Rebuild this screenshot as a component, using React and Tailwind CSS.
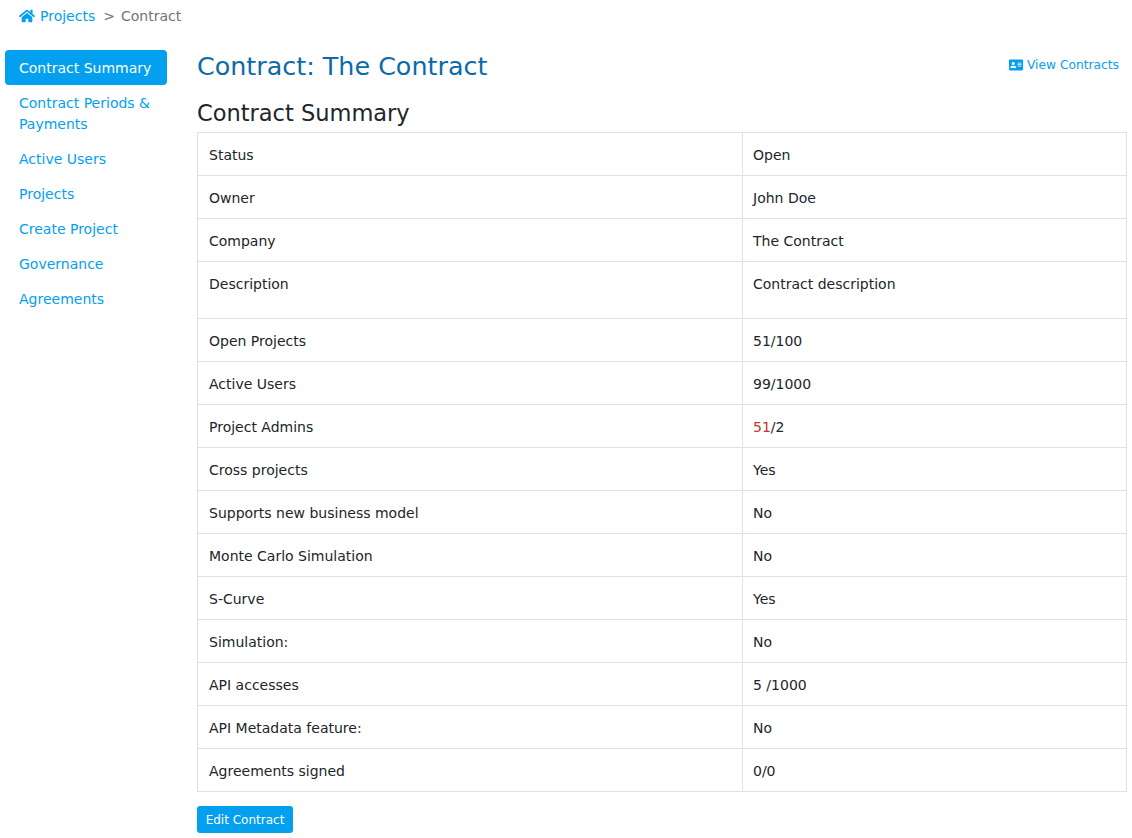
import { FaHome, FaAddressCard } from 'react-icons/fa';

const navItems = [
  'Contract Periods & Payments',
  'Active Users',
  'Projects',
  'Create Project',
  'Governance',
  'Agreements',
];

const rows = [
  ['Status', 'Open'],
  ['Owner', 'John Doe'],
  ['Company', 'The Contract'],
  ['Description', 'Contract description', 'h-[57px]'],
  ['Open Projects', '51/100'],
  ['Active Users', '99/1000'],
  ['Project Admins', <><span className="text-[#c0392b]">51</span>/2</>],
  ['Cross projects', 'Yes'],
  ['Supports new business model', 'No'],
  ['Monte Carlo Simulation', 'No'],
  ['S-Curve', 'Yes'],
  ['Simulation:', 'No'],
  ['API accesses', '5 /1000'],
  ['API Metadata feature:', 'No'],
  ['Agreements signed', '0/0'],
];

export default function App() {
  return (
    <div className="w-[1132px] h-[838px] overflow-hidden bg-white text-[14px] leading-[21px] text-[#212529] font-['DejaVu_Sans',sans-serif]">
      <div className="flex items-center h-[32px] pl-[19px] text-[#6c757d]">
        <a className="flex items-center gap-[5px] text-[#03a0f0]">
          <FaHome className="text-[16px]" />
          Projects
        </a>
        <span className="ml-[8px] mr-[6px]">&gt;</span>
        <span>Contract</span>
      </div>

      <div className="flex mt-[18px]">
        <nav className="w-[162px] ml-[5px] shrink-0 flex flex-col">
          <a className="rounded bg-[#03a0f0] text-white px-[14px] pt-[8px] pb-[6px]">Contract Summary</a>
          {navItems.map((item) => (
            <a key={item} className="px-[14px] pt-[8px] pb-[6px] text-[#03a0f0]">{item}</a>
          ))}
        </nav>

        <main className="ml-[30px] w-[930px]">
          <div className="flex items-center justify-between h-[32px]">
            <h1 className="text-[25.4px] font-normal text-[#0b6aa8]">Contract: The Contract</h1>
            <a className="flex items-center gap-[4px] text-[12.25px] leading-[18px] text-[#03a0f0] mr-[8px] -translate-y-px">
              <FaAddressCard className="text-[14px]" />
              View Contracts
            </a>
          </div>
          <h2 className="mt-[19px] text-[22.5px] leading-[25px] text-[#212529]">Contract Summary</h2>
          <table className="mt-[6px] w-full border-collapse border border-[#dee2e6]">
            <tbody>
              {rows.map(([label, value, height]) => (
                <tr key={label} className={height || 'h-[43px]'}>
                  <td className="w-[545px] border border-[#dee2e6] pl-[11px] pr-[10px] pt-[12px] pb-[9px] align-top">{label}</td>
                  <td className="border border-[#dee2e6] px-[10px] pt-[12px] pb-[9px] align-top">{value}</td>
                </tr>
              ))}
            </tbody>
          </table>
          <button className="mt-[14px] h-[27px] w-[96px] rounded-[3px] bg-[#03a0f0] pt-[2px] text-white text-[12px]">Edit Contract</button>
        </main>
      </div>
    </div>
  );
}
